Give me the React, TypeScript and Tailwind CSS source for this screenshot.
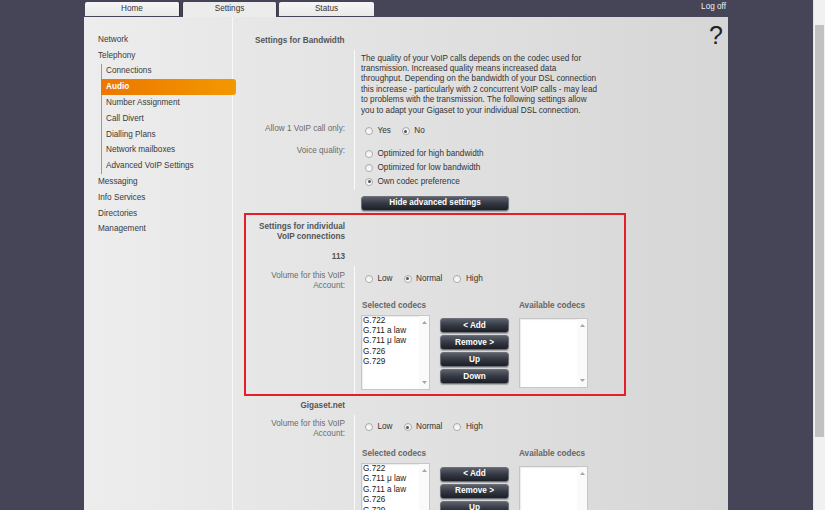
import React from 'react';

const codecsA = ['G.722', 'G.711 a law', 'G.711 μ law', 'G.726', 'G.729'];
const codecsB = ['G.722', 'G.711 μ law', 'G.711 a law', 'G.726', 'G.729'];

const bandwidthText = [
  'The quality of your VoIP calls depends on the codec used for',
  'transmission. Increased quality means increased data',
  'throughput. Depending on the bandwidth of your DSL connection',
  'this increase - particularly with 2 concurrent VoIP calls - may lead',
  'to problems with the transmission. The following settings allow',
  'you to adapt your Gigaset to your individual DSL connection.',
];

function Radio({ checked = false }: { checked?: boolean }) {
  return (
    <span className="ml-[4px] flex h-[8px] w-[8px] shrink-0 items-center justify-center rounded-full border border-[#ababab] bg-linear-to-b from-[#ececec] to-white">
      {checked && <span className="h-[3px] w-[3px] rounded-full bg-[#555]" />}
    </span>
  );
}

function RadioOption({ label, checked = false }: { label: string; checked?: boolean }) {
  return (
    <span className="flex items-center gap-[4.5px] text-[#333]">
      <Radio checked={checked} />
      {label}
    </span>
  );
}

function DarkButton({ label, className = '' }: { label: string; className?: string }) {
  return (
    <div
      className={`flex h-[15px] items-center justify-center rounded-[3px] border border-[#6d7078] bg-linear-to-b from-[#5b606b] via-[#343842] to-[#1c1f26] font-bold text-white shadow-[0_1px_1px_rgba(0,0,0,0.25)] ${className}`}
    >
      {label}
    </div>
  );
}

function Listbox({ items, className = '' }: { items: string[]; className?: string }) {
  return (
    <div className={`flex w-[69px] border border-[#c6c6c6] bg-white shadow-[inset_1px_1px_1px_rgba(0,0,0,0.08)] ${className}`}>
      <div className="flex-1 pl-[1px] leading-[10.4px] text-[#222]">
        {items.map((c) => (
          <div key={c}>{c}</div>
        ))}
      </div>
      <div className="flex w-[10px] flex-col items-center justify-between bg-[#fafafa] pt-[5px] pb-[5px]">
        <svg width="5" height="3" viewBox="0 0 5 3">
          <path d="M2.5 0 L5 3 L0 3 Z" fill="#a6a6a6" />
        </svg>
        <svg width="5" height="3" viewBox="0 0 5 3">
          <path d="M0 0 L5 0 L2.5 3 Z" fill="#a6a6a6" />
        </svg>
      </div>
    </div>
  );
}

function Label({ children, className = '' }: { children?: React.ReactNode; className?: string }) {
  return <div className={`w-[108px] shrink-0 pr-[9px] text-right leading-[10.4px] ${className}`}>{children}</div>;
}

function Control({ children, className = '' }: { children?: React.ReactNode; className?: string }) {
  return <div className={`flex-1 border-l border-[#fafafa] pl-[6px] ${className}`}>{children}</div>;
}

function VoipBlock({ codecs }: { codecs: string[] }) {
  return (
    <div className="flex">
      <Label className="pt-[4.5px] text-[#6b6b6b]">Volume for this VoIP Account:</Label>
      <Control className="pt-[5.5px]">
        <div className="flex h-[14px] items-center gap-[7px]">
          <RadioOption label="Low" />
          <RadioOption label="Normal" checked />
          <RadioOption label="High" />
        </div>
        <div className="mt-[15px] flex gap-[10px] pb-[4px]">
          <div>
            <div className="pl-[1px] font-bold leading-[10.4px] text-[#666]">Selected codecs</div>
            <Listbox items={codecs} className="mt-[3.5px] h-[75px]" />
          </div>
          <div className="flex w-[69px] flex-col gap-[2px] pt-[17.5px]">
            <DarkButton label="< Add" />
            <DarkButton label="Remove >" />
            <DarkButton label="Up" />
            <DarkButton label="Down" />
          </div>
          <div>
            <div className="font-bold leading-[10.4px] text-[#666]">Available codecs</div>
            <Listbox items={[]} className="mt-[6.5px] h-[70px]" />
          </div>
        </div>
      </Control>
    </div>
  );
}

const sideTop = ['Network', 'Telephony'];
const sideSub = ['Connections', 'Audio', 'Number Assignment', 'Call Divert', 'Dialling Plans', 'Network mailboxes', 'Advanced VoIP Settings'];
const sideBottom = ['Messaging', 'Info Services', 'Directories', 'Management'];

export default function App() {
  return (
    <div className="flex h-[510px] w-[825px] overflow-hidden font-['Liberation_Sans',Arial,sans-serif] text-[8.2px]">
      <div className="flex-1 bg-[#464457] pl-[84px]">
        <div className="w-[644px]">
          {/* Tabs */}
          <div className="flex h-[17px] items-start">
            <div className="mt-[2px] ml-[1px] flex h-[14px] w-[95px] items-center justify-center rounded-t-[2px] border-r border-[#2e2d3a] bg-linear-to-b from-[#f6f6f6] to-[#e9e9e9] text-[#333]">
              Home
            </div>
            <div className="mt-[2px] ml-[2px] flex h-[15px] w-[95px] items-center justify-center rounded-t-[2px] border-x border-[#3a3a44] bg-[#ececec] pb-[1px] text-[#333]">
              Settings
            </div>
            <div className="mt-[2px] ml-[2px] flex h-[14px] w-[95px] items-center justify-center rounded-t-[2px] bg-linear-to-b from-[#f6f6f6] to-[#e9e9e9] text-[#333]">
              Status
            </div>
            <div className="mt-[1.5px] ml-auto pr-[2px] leading-[10.4px] text-[#f0f0f0]">Log off</div>
          </div>

          {/* Panel */}
          <div className="flex min-h-[500px] bg-linear-to-r from-[#ededed] to-[#d6d6d6]">
            {/* Sidebar */}
            <div className="w-[149px] shrink-0 border-r border-[#f8f8f8] pt-[15px] pl-[14px] text-[#3a3a3a]">
              {sideTop.map((s) => (
                <div key={s} className="flex h-[15.8px] items-center">
                  {s}
                </div>
              ))}
              <div className="ml-[3px] border-l border-[#9a9a9a]">
                {sideSub.map((s) =>
                  s === 'Audio' ? (
                    <div
                      key={s}
                      className="-ml-px flex h-[15.8px] w-[135px] items-center rounded-r-[3px] bg-linear-to-r from-[#ec7700] to-[#f39800] pl-[5px] font-bold text-white"
                    >
                      {s}
                    </div>
                  ) : (
                    <div key={s} className="flex h-[15.8px] items-center pl-[4px]">
                      {s}
                    </div>
                  ),
                )}
              </div>
              {sideBottom.map((s) => (
                <div key={s} className="flex h-[15.8px] items-center">
                  {s}
                </div>
              ))}
            </div>

            {/* Main */}
            <div className="flex flex-1 pt-[6px]">
              <div className="ml-[11px] w-[382px] pt-[7px]">
                {/* Bandwidth */}
                <div className="border-2 border-transparent">
                  <div className="h-[16px] pl-[9px] font-bold leading-[17px] text-[#555]">Settings for Bandwidth</div>
                  <div className="mt-[2px] flex">
                    <Label />
                    <Control className="pt-[3.5px] pb-[7.5px]">
                      <div className="leading-[10.4px] whitespace-nowrap text-[#333]">
                        {bandwidthText.map((l) => (
                          <div key={l}>{l}</div>
                        ))}
                      </div>
                    </Control>
                  </div>
                  <div className="flex">
                    <Label className="pt-[1px] text-[#6b6b6b]">Allow 1 VoIP call only:</Label>
                    <Control>
                      <div className="flex h-[16px] items-center gap-[7px]">
                        <RadioOption label="Yes" />
                        <RadioOption label="No" checked />
                      </div>
                    </Control>
                  </div>
                  <div className="flex">
                    <Label className="pt-[7px] text-[#6b6b6b]">Voice quality:</Label>
                    <Control className="pt-[8px] pb-[1px]">
                      <div className="flex h-[13.8px] items-center">
                        <RadioOption label="Optimized for high bandwidth" />
                      </div>
                      <div className="flex h-[13.8px] items-center">
                        <RadioOption label="Optimized for low bandwidth" />
                      </div>
                      <div className="flex h-[13.8px] items-center">
                        <RadioOption label="Own codec preference" checked />
                      </div>
                    </Control>
                  </div>
                  <div className="flex pt-[6px] pb-[0.2px]">
                    <Label />
                    <div className="pl-[7px]">
                      <DarkButton label="Hide advanced settings" className="w-[148px]" />
                    </div>
                  </div>
                </div>

                {/* Individual VoIP connection */}
                <div className="border-2 border-[#e3202a]">
                  <div className="flex pt-[7px]">
                    <Label className="font-bold text-[#555]">Settings for individual VoIP connections</Label>
                  </div>
                  <div className="mt-[9px] flex">
                    <Label className="font-bold text-[#555]">113</Label>
                  </div>
                  <div className="mt-[4px]">
                    <VoipBlock codecs={codecsA} />
                  </div>
                </div>

                {/* Gigaset.net */}
                <div className="border-2 border-transparent">
                  <div className="flex pt-[3px]">
                    <Label className="font-bold text-[#555]">Gigaset.net</Label>
                  </div>
                  <div className="mt-[3.5px]">
                    <VoipBlock codecs={codecsB} />
                  </div>
                </div>
              </div>
              <div className="flex flex-1 justify-end pr-[5px]">
                <div className="text-[25px] leading-none text-[#222]">?</div>
              </div>
            </div>
          </div>
        </div>
      </div>
      {/* Scrollbar */}
      <div className="w-[12px] shrink-0 border-l border-[#e3e3e3] bg-[#f1f1f1] px-[1px] pt-[25px]">
        <div className="h-[412px] bg-[#c1c1c1]" />
      </div>
    </div>
  );
}
